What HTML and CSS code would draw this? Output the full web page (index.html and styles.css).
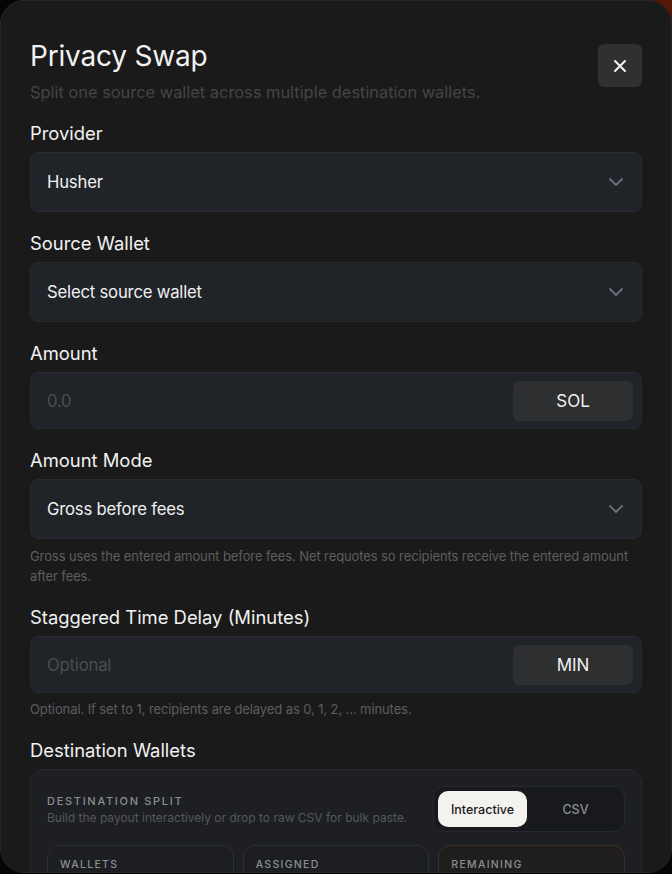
FILE: index.html
```html
<!DOCTYPE html>
<html>
<head>
<meta charset="utf-8">
<link rel="stylesheet" href="styles.css">
</head>
<body>
<div class="modal">
  <header class="head">
    <div class="head-text">
      <h1 class="title">Privacy Swap</h1>
      <p class="subtitle">Split one source wallet across multiple destination wallets.</p>
    </div>
    <button class="close" aria-label="Close">
      <svg width="14" height="14" viewBox="0 0 14 14"><path d="M2 2L12 12M12 2L2 12" stroke="#f2f2f2" stroke-width="2" stroke-linecap="round"/></svg>
    </button>
  </header>

  <div class="field">
    <div class="label">Provider</div>
    <div class="select"><span class="value">Husher</span><svg class="chev" width="14" height="8" viewBox="0 0 14 8"><path d="M1 1L7 7L13 1" fill="none" stroke="#6c7077" stroke-width="1.8" stroke-linecap="round" stroke-linejoin="round"/></svg></div>
  </div>

  <div class="field">
    <div class="label">Source Wallet</div>
    <div class="select"><span class="value">Select source wallet</span><svg class="chev" width="14" height="8" viewBox="0 0 14 8"><path d="M1 1L7 7L13 1" fill="none" stroke="#6c7077" stroke-width="1.8" stroke-linecap="round" stroke-linejoin="round"/></svg></div>
  </div>

  <div class="field">
    <div class="label">Amount</div>
    <div class="input"><span class="placeholder">0.0</span><span class="unit">SOL</span></div>
  </div>

  <div class="field">
    <div class="label">Amount Mode</div>
    <div class="select"><span class="value">Gross before fees</span><svg class="chev" width="14" height="8" viewBox="0 0 14 8"><path d="M1 1L7 7L13 1" fill="none" stroke="#6c7077" stroke-width="1.8" stroke-linecap="round" stroke-linejoin="round"/></svg></div>
    <p class="help">Gross uses the entered amount before fees. Net requotes so recipients receive the entered amount after fees.</p>
  </div>

  <div class="field">
    <div class="label">Staggered Time Delay (Minutes)</div>
    <div class="input"><span class="placeholder">Optional</span><span class="unit">MIN</span></div>
    <p class="help tight">Optional. If set to 1, recipients are delayed as 0, 1, 2, ... minutes.</p>
  </div>

  <div class="field">
    <div class="label">Destination Wallets</div>
    <div class="card">
      <div class="card-head">
        <div>
          <div class="eyebrow">DESTINATION SPLIT</div>
          <div class="card-sub">Build the payout interactively or drop to raw CSV for bulk paste.</div>
        </div>
        <div class="toggle">
          <span class="tab active">Interactive</span>
          <span class="tab">CSV</span>
        </div>
      </div>
      <div class="stats">
        <div class="stat"><div class="stat-label">WALLETS</div></div>
        <div class="stat"><div class="stat-label">ASSIGNED</div></div>
        <div class="stat warn"><div class="stat-label">REMAINING</div></div>
      </div>
    </div>
  </div>
</div>
</body>
</html>
```

FILE: styles.css
```css
* { box-sizing: border-box; }
html, body { margin: 0; padding: 0; }
body {
  width: 672px;
  height: 874px;
  overflow: hidden;
  background: radial-gradient(circle at 100% 0%, #5a1a08 0%, #220904 7%, #050505 15%), #050505;
  font-family: Inter, "Noto Sans", sans-serif;
  color: #f1f1f1;
}
.modal {
  width: 672px;
  height: 873px;
  background: #1a1a1a;
  border: 1px solid #262626;
  border-radius: 24px;
  overflow: hidden;
  padding: 39px 29px 0;
}
.head {
  display: flex;
  justify-content: space-between;
  align-items: flex-start;
}
.title {
  margin: 0;
  font-size: 28px;
  font-weight: 400;
  line-height: 32px;
  letter-spacing: -0.2px;
}
.subtitle {
  margin: 10px 0 0;
  font-size: 16.4px;
  line-height: 20px;
  color: #444546;
}
.close {
  margin-top: 4px;
  width: 44px;
  height: 43px;
  border: none;
  border-radius: 6px;
  background: #2f3030;
  display: flex;
  align-items: center;
  justify-content: center;
  padding: 0;
}
.field { margin-top: 19px; }
.head + .field { margin-top: 19px; }
.label {
  font-size: 18.4px;
  line-height: 24px;
  margin-bottom: 7px;
}
.select, .input {
  display: flex;
  align-items: center;
  justify-content: space-between;
  background: #202328;
  border: 1px solid #272b31;
  border-radius: 8px;
}
.select {
  height: 60px;
  padding: 0 18px 0 16px;
}
.value {
  font-size: 16.7px;
  letter-spacing: -0.2px;
}
.input {
  height: 57px;
  padding: 0 8px 0 16px;
}
.placeholder {
  font-size: 16.7px;
  color: #4a4d52;
  letter-spacing: -0.2px;
}
.unit {
  width: 120px;
  height: 40px;
  border-radius: 6px;
  background: #2e2f30;
  display: flex;
  align-items: center;
  justify-content: center;
  font-size: 17px;
}
.help {
  margin: 7px 0 0;
  font-size: 13px;
  line-height: 20px;
  color: #5d5e60;
  letter-spacing: -0.1px;
}
.help.tight { margin-top: 6px; }
.card {
  margin-top: 6px;
  background: #1d1f23;
  border: 1px solid #272a30;
  border-radius: 14px;
  padding: 16px 16px 0;
}
.card-head {
  display: flex;
  justify-content: space-between;
  align-items: flex-start;
}
.eyebrow {
  margin-top: 8px;
  font-size: 11px;
  line-height: 14px;
  letter-spacing: 1.7px;
  color: #8b8e93;
  font-weight: 500;
}
.card-sub {
  margin-top: 2px;
  font-size: 12px;
  line-height: 16px;
  color: #55585d;
}
.toggle {
  width: 192px;
  height: 46px;
  border: 1px solid #262a30;
  background: #17191c;
  border-radius: 12px;
  padding: 4px;
  display: flex;
}
.tab {
  flex: 1;
  display: flex;
  align-items: center;
  justify-content: center;
  font-size: 12.5px;
  color: #8b8e93;
  border-radius: 10px;
  font-weight: 500;
}
.tab.active {
  background: #f3f2ef;
  color: #1a1a1a;
  flex: 0 0 89px;
}
.tab + .tab { padding-left: 4px; }
.stats {
  margin-top: 13px;
  display: grid;
  grid-template-columns: repeat(3, 1fr);
  gap: 9px;
}
.stat {
  height: 60px;
  border: 1px solid #2b2e34;
  background: #1c1e22;
  border-radius: 12px;
  padding: 12px 12px;
}
.stat.warn {
  border-color: #3a3028;
  background: #201e1c;
}
.stat-label {
  font-size: 10.5px;
  letter-spacing: 1.3px;
  color: #8b8e93;
  font-weight: 500;
}
```
